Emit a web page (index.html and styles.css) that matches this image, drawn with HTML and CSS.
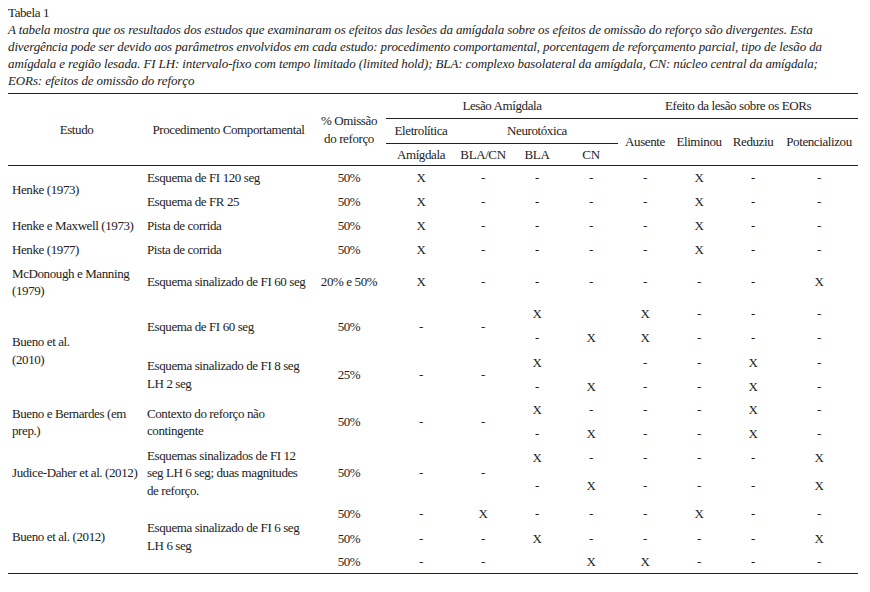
FILE: index.html
```html
<!DOCTYPE html>
<html lang="pt">
<head>
<meta charset="utf-8">
<title>Tabela 1</title>
<link rel="stylesheet" href="styles.css">
</head>
<body>
<div class="page">
  <div class="title">Tabela 1</div>
  <div class="caption">A tabela mostra que os resultados dos estudos que examinaram os efeitos das lesões da amígdala sobre os efeitos de omissão do reforço são divergentes. Esta<br>divergência pode ser devido aos parâmetros envolvidos em cada estudo: procedimento comportamental, porcentagem de reforçamento parcial, tipo de lesão da<br>amígdala e região lesada. FI LH: intervalo-fixo com tempo limitado (limited hold); BLA: complexo basolateral da amígdala, CN: núcleo central da amígdala;<br>EORs: efeitos de omissão do reforço</div>
  <table class="tbl">
    <colgroup>
      <col class="w-estudo"><col class="w-proc"><col class="w-omis">
      <col class="w-amig"><col class="w-n"><col class="w-n"><col class="w-n">
      <col class="w-n"><col class="w-n"><col class="w-n"><col class="w-pot">
    </colgroup>
    <thead>
      <tr class="h1">
        <th rowspan="3">Estudo</th>
        <th rowspan="3">Procedimento Comportamental</th>
        <th rowspan="3">% Omissão<br>do reforço</th>
        <th colspan="4" class="rule">Lesão Amígdala</th>
        <th colspan="4" class="rule">Efeito da lesão sobre os EORs</th>
      </tr>
      <tr class="h2">
        <th class="rule">Eletrolítica</th>
        <th colspan="3" class="rule">Neurotóxica</th>
        <th rowspan="2">Ausente</th>
        <th rowspan="2">Eliminou</th>
        <th rowspan="2">Reduziu</th>
        <th rowspan="2">Potencializou</th>
      </tr>
      <tr class="h3">
        <th>Amígdala</th><th>BLA/CN</th><th>BLA</th><th>CN</th>
      </tr>
    </thead>
    <tbody>
      <tr class="r24">
        <td rowspan="2" class="study">Henke (1973)</td>
        <td class="proc">Esquema de FI 120 seg</td>
        <td>50%</td><td>X</td><td>-</td><td>-</td><td>-</td><td>-</td><td>X</td><td>-</td><td>-</td>
      </tr>
      <tr class="r24">
        <td class="proc">Esquema de FR 25</td>
        <td>50%</td><td>X</td><td>-</td><td>-</td><td>-</td><td>-</td><td>X</td><td>-</td><td>-</td>
      </tr>
      <tr class="r24">
        <td class="study">Henke e Maxwell (1973)</td>
        <td class="proc">Pista de corrida</td>
        <td>50%</td><td>X</td><td>-</td><td>-</td><td>-</td><td>-</td><td>X</td><td>-</td><td>-</td>
      </tr>
      <tr class="r24">
        <td class="study">Henke (1977)</td>
        <td class="proc">Pista de corrida</td>
        <td>50%</td><td>X</td><td>-</td><td>-</td><td>-</td><td>-</td><td>X</td><td>-</td><td>-</td>
      </tr>
      <tr class="r41">
        <td class="study">McDonough e Manning<br>(1979)</td>
        <td class="proc">Esquema sinalizado de FI 60 seg</td>
        <td>20% e 50%</td><td>X</td><td>-</td><td>-</td><td>-</td><td>-</td><td>-</td><td>-</td><td>X</td>
      </tr>

      <tr class="r23">
        <td rowspan="4" class="study">Bueno et al.<br>(2010)</td>
        <td rowspan="2" class="proc">Esquema de FI 60 seg</td>
        <td rowspan="2">50%</td><td rowspan="2">-</td><td rowspan="2">-</td>
        <td>X</td><td></td><td>X</td><td>-</td><td>-</td><td>-</td>
      </tr>
      <tr class="r25">
        <td>-</td><td>X</td><td>X</td><td>-</td><td>-</td><td>-</td>
      </tr>
      <tr class="r24">
        <td rowspan="2" class="proc">Esquema sinalizado de FI 8 seg<br>LH 2 seg</td>
        <td rowspan="2">25%</td><td rowspan="2">-</td><td rowspan="2">-</td>
        <td>X</td><td></td><td>-</td><td>-</td><td>X</td><td>-</td>
      </tr>
      <tr class="r24">
        <td>-</td><td>X</td><td>-</td><td>-</td><td>X</td><td>-</td>
      </tr>

      <tr class="r23">
        <td rowspan="2" class="study">Bueno e Bernardes (em<br>prep.)</td>
        <td rowspan="2" class="proc">Contexto do reforço não<br>contingente</td>
        <td rowspan="2">50%</td><td rowspan="2">-</td><td rowspan="2">-</td>
        <td>X</td><td>-</td><td>-</td><td>-</td><td>X</td><td>-</td>
      </tr>
      <tr class="r24">
        <td>-</td><td>X</td><td>-</td><td>-</td><td>X</td><td>-</td>
      </tr>

      <tr class="r25">
        <td rowspan="2" class="study">Judice-Daher et al. (2012)</td>
        <td rowspan="2" class="proc">Esquemas sinalizados de FI 12<br>seg LH 6 seg; duas magnitudes<br>de reforço.</td>
        <td rowspan="2">50%</td><td rowspan="2">-</td><td rowspan="2">-</td>
        <td>X</td><td>-</td><td>-</td><td>-</td><td>-</td><td>X</td>
      </tr>
      <tr class="r30">
        <td>-</td><td>X</td><td>-</td><td>-</td><td>-</td><td>X</td>
      </tr>

      <tr class="r26">
        <td rowspan="3" class="study">Bueno et al. (2012)</td>
        <td rowspan="3" class="proc">Esquema sinalizado de FI 6 seg<br>LH 6 seg</td>
        <td>50%</td><td>-</td><td>X</td><td>-</td><td>-</td><td>-</td><td>X</td><td>-</td><td>-</td>
      </tr>
      <tr class="r24">
        <td>50%</td><td>-</td><td>-</td><td>X</td><td>-</td><td>-</td><td>-</td><td>-</td><td>X</td>
      </tr>
      <tr class="r23">
        <td>50%</td><td>-</td><td>-</td><td></td><td>X</td><td>X</td><td>-</td><td>-</td><td>-</td>
      </tr>
    </tbody>
  </table>
</div>
</body>
</html>
```

FILE: styles.css
```css
html, body {
  margin: 0;
  padding: 0;
  background: #ffffff;
}

.page {
  padding: 4px 8px 0 8px;
  font-family: "Liberation Serif", "Times New Roman", serif;
  font-size: 13px;
  color: #222222;
  letter-spacing: -0.4px;
}

.title {
  line-height: 17px;
  white-space: nowrap;
}

.caption {
  font-style: italic;
  line-height: 17px;
  white-space: nowrap;
  letter-spacing: -0.12px;
  margin-bottom: 4px;
}

.tbl {
  width: 849px;
  border-collapse: collapse;
  table-layout: fixed;
  border-top: 1px solid #222;
  border-bottom: 1px solid #222;
}

.tbl thead {
  border-bottom: 1px solid #222;
}

.w-estudo { width: 137px; }
.w-proc { width: 167px; }
.w-omis { width: 74px; }
.w-amig { width: 70px; }
.w-n { width: 54px; }
.w-pot { width: 78px; }

.tbl th,
.tbl td {
  padding: 0;
  font-weight: normal;
  text-align: center;
  vertical-align: middle;
  line-height: 17.5px;
  white-space: nowrap;
}

.tbl th.rule {
  border-bottom: 1px solid #222;
}

.tbl td.study {
  text-align: left;
  padding-left: 4px;
}

.tbl td.proc {
  text-align: left;
  padding-left: 2px;
}

.h1 { height: 25px; }
.h2 { height: 25px; }
.h3 { height: 22px; }

.r23 { height: 23px; }
.r24 { height: 24px; }
.r25 { height: 25px; }
.r26 { height: 26px; }
.r30 { height: 30px; }
.r41 { height: 41px; }
```
